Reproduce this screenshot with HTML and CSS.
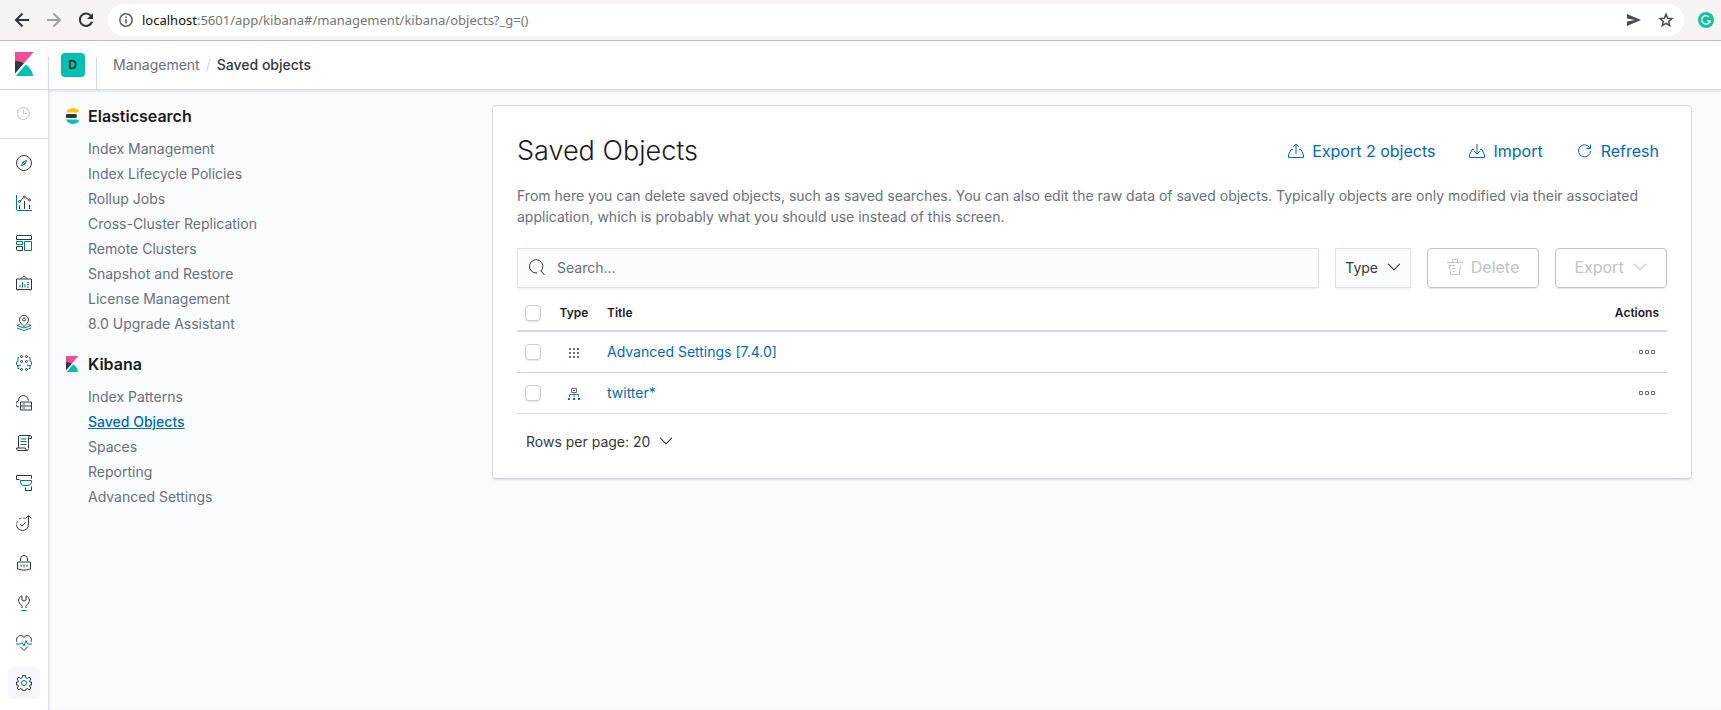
FILE: index.html
```html
<!DOCTYPE html>
<html lang="en">
<head>
<meta charset="utf-8">
<title>Saved objects - Kibana</title>
<link rel="stylesheet" href="styles.css">
</head>
<body>
<svg class="defs" aria-hidden="true">
  <symbol id="logo-kibana" viewBox="0 0 32 32">
    <path fill="#f04e98" d="M4 0v28.789L28.935.017z"/>
    <path fill="#343741" d="M4 12v16.789l11.906-13.738A24.721 24.721 0 0 0 4 12z"/>
    <path fill="#00bfb3" d="M18.479 16.664L6.268 30.754l-1.073 1.237h23.191c-1.252-6.292-4.883-11.719-9.907-15.327z"/>
    <path fill="none" stroke="#fff" stroke-width="1.4" d="M4 30L17.5 14.4"/>
  </symbol>
  <symbol id="chevron" viewBox="0 0 16 16"><path fill="none" stroke="currentColor" stroke-width="1.1" stroke-linecap="round" stroke-linejoin="round" d="M2.4 5.2L8 10.8l5.600-5.600"/></symbol>
  <symbol id="dots" viewBox="0 0 16 16"><path fill="none" stroke="currentColor" d="M.5 6.500h3v3h-3zM6.500 6.500h3v3h-3zM12.500 6.500h3v3h-3z"/></symbol>
</svg>

<div class="browser">
  <div class="browser-buttons">
    <button aria-label="Back"><svg width="16" height="16" viewBox="0 0 16 16" fill="none" stroke="#2e3436" stroke-width="2"><path d="M15 8H2.500M8.500 1.500L2 8l6.500 6.500"/></svg></button>
    <button aria-label="Forward"><svg width="16" height="16" viewBox="0 0 16 16" fill="none" stroke="#a0a1a1" stroke-width="2"><path d="M1 8h12.500M7.500 1.500L14 8l-6.500 6.500"/></svg></button>
    <button aria-label="Reload"><svg width="16" height="16" viewBox="0 0 16 16" fill="none" stroke="#2e3436" stroke-width="2"><path d="M13 4A6.200 6.200 0 1 0 14 9.600"/><path d="M15 1v6H9z" fill="#2e3436" stroke="none"/></svg></button>
  </div>
  <div class="address">
    <svg width="16" height="16" viewBox="0 0 16 16" fill="none" stroke="#5f6368" stroke-width="1.500"><circle cx="8" cy="8" r="6.200"/><path d="M8 7v4.500M8 4.500V6"/></svg>
    <div class="url"><b>localhost</b>:5601/app/kibana#/management/kibana/objects?_g=()</div>
    <button aria-label="Send"><svg width="16" height="16" viewBox="0 0 16 16" fill="#4a4d50"><path d="M1 2l14 6-14 6V9.500L9 8 1 6.500z"/></svg></button>
    <button aria-label="Bookmark"><svg width="16" height="16" viewBox="0 0 16 16" fill="none" stroke="#4a4d50" stroke-width="1.500"><path d="M8 2.200l1.700 4 4.300.4-3.300 2.800 1 4.200L8 11.400l-3.700 2.200 1-4.200L2 6.600l4.300-.4z"/></svg></button>
  </div>
  <svg class="grammarly" width="16" height="16" viewBox="0 0 16 16"><circle cx="8" cy="8" r="8" fill="#15c39a"/><path d="M11 5a4.200 4.200 0 1 0 1 3.800H9M12 8.500V11" fill="none" stroke="#fff" stroke-width="1.300"/></svg>
</div>

<div class="app">
  <nav class="rail" aria-label="Applications">
    <a class="rail-logo" href="#" aria-label="Home"><svg width="24" height="24"><use href="#logo-kibana"/></svg></a>
    <div class="rail-recent">
      <a class="rail-item" href="#" aria-label="Recently viewed"><svg viewBox="0 0 16 16" fill="none" stroke="#c2c3c6"><circle cx="7.500" cy="7.500" r="6"/><path d="M7.500 4v3.500H11"/></svg></a>
    </div>
    <a class="rail-item" href="#" aria-label="Discover"><svg viewBox="0 0 32 32"><circle cx="16" cy="16" r="15"/><path class="teal" d="M21.500 10.500L18 18l-7.500 3.500L14 14zM14 14l4 4"/></svg></a>
    <a class="rail-item" href="#" aria-label="Visualize"><svg viewBox="0 0 32 32"><path class="teal" d="M1 0v29a2 2 0 0 0 2 2h29"/><path d="M7 28v-7M17 28V12M27 28v-8M9 12l5-6M19 5l6 4"/><circle cx="7" cy="13" r="2"/><circle cx="16.500" cy="4" r="2"/><circle cx="27" cy="10" r="2"/></svg></a>
    <a class="rail-item" href="#" aria-label="Dashboard"><svg viewBox="0 0 32 32"><path d="M2 1h28a1 1 0 0 1 1 1v7H1V2a1 1 0 0 1 1-1z"/><path class="teal" d="M1 13h12v6H1zM17 13h14v18H17z"/><path d="M1 23h12v8H3a2 2 0 0 1-2-2z"/></svg></a>
    <a class="rail-item" href="#" aria-label="Canvas"><svg viewBox="0 0 32 32"><path d="M1 8h30v21H1zM9 8l5-5q2-2 4 0l5 5M4 29v2M28 29v2"/><path class="teal" d="M8 25v-5M13 25V14M18 25v-7M22 15h4M22 19h4M22 24h4"/></svg></a>
    <a class="rail-item" href="#" aria-label="Maps"><svg viewBox="0 0 32 32"><path d="M16 23C11 18 7 14 7 9.500a9 9 0 0 1 18 0C25 14 21 18 16 23z"/><circle cx="16" cy="9" r="3"/><path class="teal" d="M8 18l-6 3 14 5 14-5-6-3M2 26l14 5 14-5"/></svg></a>
    <a class="rail-item" href="#" aria-label="Machine Learning"><svg viewBox="0 0 32 32"><circle cx="11" cy="3" r="2"/><circle cx="21" cy="3" r="2"/><circle cx="11" cy="13" r="2"/><circle cx="21" cy="13" r="2"/><circle cx="11" cy="29" r="2"/><circle cx="21" cy="29" r="2"/><path class="teal" d="M6 5H4v7l-3 2v5l3 3v5h3M26 5h2v7l3 2v5l-3 3v5h-3M4 21l6-1M28 21l-6-1"/></svg></a>
    <a class="rail-item" href="#" aria-label="Infrastructure"><svg viewBox="0 0 32 32"><path d="M6 24a6 6 0 0 1-1-12C5 5 9 1 14.500 1S24 5 25 11M9 14h22v16H9zM9 22h22"/><path class="teal" d="M13 18h5M13 26h5"/></svg></a>
    <a class="rail-item" href="#" aria-label="Logs"><svg viewBox="0 0 32 32"><path d="M5 26V4q0-3 3-3h20q-3 0-3 4v21M28 1q3 0 3 3v3h-6M22 31H4q-3 0-3-5h18q0 5 3 5t3-4"/><path class="teal" d="M9 8h12M9 13h12M9 19h12"/></svg></a>
    <a class="rail-item" href="#" aria-label="APM"><svg viewBox="0 0 32 32"><path d="M31 7V1H1v8h6M19 25v6h12v-8"/><path class="teal" d="M9 11h22v3q0 7-7 7H15q-6 0-6-7z"/></svg></a>
    <a class="rail-item" href="#" aria-label="Uptime"><svg viewBox="0 0 32 32"><path d="M1 19a12 12 0 0 0 24 0V2M19 7l6-6 6 6M8 18l4 4 7-7"/><path class="teal" d="M1 17l2-5M6 8l5-2M14 6h4"/></svg></a>
    <a class="rail-item" href="#" aria-label="SIEM"><svg viewBox="0 0 32 32"><path d="M3 14h26v14q-13 5-26 0zM9 12V8a7 7 0 0 1 14 0v4"/><path class="teal" d="M10 19v5M16 19v6M22 19v5"/></svg></a>
    <a class="rail-item" href="#" aria-label="Dev Tools"><svg viewBox="0 0 32 32"><path d="M12 26v-5C2 15 4 4 12 2v8l4 2 4-2V2c8 2 10 13 0 19v5"/><path class="teal" d="M11 31h10"/></svg></a>
    <a class="rail-item" href="#" aria-label="Stack Monitoring"><svg viewBox="0 0 32 32"><path d="M2 14C-1 5 5 1 10 1q4 0 6 4 2-4 6-4c5 0 11 4 8 13M8 23l8 8 8-8"/><path class="teal" d="M0 18h9l3-3 4 7 4-11 3 7h9"/></svg></a>
    <a class="rail-item active" href="#" aria-label="Management"><svg viewBox="0 0 32 32"><path d="M13 1h6v4l4 2 3-3 4 4-3 4 1 2h3v6h-3l-1 2 3 4-4 4-3-3-4 2v2h-6v-2l-4-2-3 3-4-4 3-4-1-2H1v-6h3l1-2-3-4 4-4 3 3 4-2z"/><circle class="teal" cx="16" cy="16" r="5"/></svg></a>
  </nav>

  <div class="workspace">
    <header class="topbar">
      <button class="space" aria-label="Default space"><span>D</span></button>
      <nav class="crumbs" aria-label="Breadcrumb"><a href="#">Management</a><i>/</i><strong>Saved objects</strong></nav>
    </header>

    <div class="page">
      <aside class="side">
        <section>
          <h2><svg width="16" height="16" viewBox="0 0 32 32"><path fill="#fec514" d="M28.924 7.662A15.381 15.381 0 0 0 30.480 6C27.547 2.346 23.050 0 18 0 11.679 0 6.239 3.678 3.644 9H25.510a5.039 5.039 0 0 0 3.413-1.338z"/><path fill="#343741" d="M4 16c0 1.384.194 2.720.538 4H22a4 4 0 0 0 0-8H4.538A15.379 15.379 0 0 0 4 16z"/><path fill="#00bfb3" d="M25.510 23H3.645C6.240 28.323 11.679 32 18 32c5.050 0 9.547-2.346 12.480-6a15.381 15.381 0 0 0-1.556-1.662A5.034 5.034 0 0 0 25.510 23z"/></svg>Elasticsearch</h2>
          <ul>
            <li><a href="#">Index Management</a></li>
            <li><a href="#">Index Lifecycle Policies</a></li>
            <li><a href="#">Rollup Jobs</a></li>
            <li><a href="#">Cross-Cluster Replication</a></li>
            <li><a href="#">Remote Clusters</a></li>
            <li><a href="#">Snapshot and Restore</a></li>
            <li><a href="#">License Management</a></li>
            <li><a href="#">8.0 Upgrade Assistant</a></li>
          </ul>
        </section>
        <section>
          <h2><svg width="16" height="16"><use href="#logo-kibana"/></svg>Kibana</h2>
          <ul>
            <li><a href="#">Index Patterns</a></li>
            <li><a href="#" class="current" aria-current="page">Saved Objects</a></li>
            <li><a href="#">Spaces</a></li>
            <li><a href="#">Reporting</a></li>
            <li><a href="#">Advanced Settings</a></li>
          </ul>
        </section>
      </aside>

      <main class="panel">
        <div class="panel-head">
          <h1>Saved Objects</h1>
          <div class="actions">
            <button><svg width="16" height="16" viewBox="0 0 16 16" fill="none" stroke="currentColor"><path d="M5 6.500H3L.5 12v2.500h15V12L13 6.500h-2M8 11V1M5 4l3-3 3 3"/></svg>Export 2 objects</button>
            <button><svg width="16" height="16" viewBox="0 0 16 16" fill="none" stroke="currentColor"><path d="M5 6.500H3L.5 12v2.500h15V12L13 6.500h-2M8 1v10M5 8l3 3 3-3"/></svg>Import</button>
            <button><svg width="16" height="16" viewBox="0 0 16 16" fill="none" stroke="currentColor"><path d="M12.500 4.500A6 6 0 1 0 13.500 8M13.500 1.500v4h-4"/></svg>Refresh</button>
          </div>
        </div>
        <p class="intro">From here you can delete saved objects, such as saved searches. You can also edit the raw data of saved objects. Typically objects are only modified via their associated application, which is probably what you should use instead of this screen.</p>

        <div class="filters">
          <label class="search">
            <svg width="16" height="16" viewBox="0 0 16 16" fill="none" stroke="currentColor"><path d="M8 14A6.700 6.700 0 1 1 12 12l3.500 4"/></svg>
            <input type="search" placeholder="Search..." aria-label="Search">
          </label>
          <button class="type">Type<svg width="16" height="16"><use href="#chevron"/></svg></button>
          <button class="bulk" disabled><svg width="16" height="16" viewBox="0 0 16 16" fill="none" stroke="currentColor"><path d="M0 3.500h16M5.500 3V.5h5V3M2.500 6l1.200 9.500h8.600L13.500 6M3 6.500h5M5.500 9.500h3M5.500 12.500h2"/></svg>Delete</button>
          <button class="bulk" disabled>Export<svg width="16" height="16"><use href="#chevron"/></svg></button>
        </div>

        <table>
          <thead>
            <tr><th class="check"><input type="checkbox" aria-label="Select all rows"></th><th class="kind">Type</th><th>Title</th><th class="more">Actions</th></tr>
          </thead>
          <tbody>
            <tr>
              <td class="check"><input type="checkbox" aria-label="Select Advanced Settings"></td>
              <td class="kind"><svg width="16" height="16" viewBox="0 0 16 16" fill="#69707d"><path d="M3 4h2v2H3zM7 4h2v2H7zM11 4h2v2h-2zM3 8h2v2H3zM7 8h2v2H7zM11 8h2v2h-2zM3 12h2v2H3zM7 12h2v2H7zM11 12h2v2h-2z"/></svg></td>
              <td><a href="#">Advanced Settings [7.4.0]</a></td>
              <td class="more"><button aria-label="Actions"><svg width="16" height="16"><use href="#dots"/></svg></button></td>
            </tr>
            <tr>
              <td class="check"><input type="checkbox" aria-label="Select twitter*"></td>
              <td class="kind"><svg width="16" height="16" viewBox="0 0 16 16" fill="none" stroke="#69707d"><path d="M5.500 3.500h5v4h-5zM8 7.500V12M3.500 12V9.500h9V12"/><path fill="#017d73" stroke="none" d="M7 5h2v1H7zM2 13h2v2H2zM7 13h2v2H7zM12 13h2v2h-2z"/></svg></td>
              <td><a href="#">twitter*</a></td>
              <td class="more"><button aria-label="Actions"><svg width="16" height="16"><use href="#dots"/></svg></button></td>
            </tr>
          </tbody>
        </table>
        <button class="rows">Rows per page: 20<svg width="16" height="16"><use href="#chevron"/></svg></button>
      </main>
    </div>
  </div>
</div>
</body>
</html>
```
FILE: styles.css
```css
* { box-sizing: border-box; }
body {
  margin: 0;
  min-height: 100vh;
  display: flex;
  flex-direction: column;
  font: 14px/21px Inter, "Liberation Sans", sans-serif;
  color: #343741;
  background: #fafbfd;
}
button {
  font: inherit;
  color: inherit;
  background: none;
  border: 0;
  padding: 0;
  display: inline-flex;
  align-items: center;
  cursor: pointer;
}
svg { flex: none; display: block; }
a { color: #006bb4; text-decoration: none; }
h1, h2, p, ul { margin: 0; padding: 0; }
ul { list-style: none; }
.defs { position: absolute; width: 0; height: 0; }

/* Browser toolbar */
.browser {
  display: flex;
  align-items: center;
  height: 41px;
  padding: 0 7px 0 14px;
  background: #f5f4f2;
  border-bottom: 1px solid #c1beb8;
}
.browser-buttons { display: flex; gap: 16px; margin-right: 14px; }
.address {
  flex: 1;
  display: flex;
  align-items: center;
  gap: 16px;
  height: 32px;
  padding: 0 10px;
  border-radius: 16px;
  background: #fff;
}
.url {
  flex: 1;
  margin-left: -8px;
  font: 13px/20px "Noto Sans", sans-serif;
  color: #757575;
}
.url b { font-weight: 400; color: #111; }
.grammarly { margin-left: 14px; }

/* Icon rail */
.app { flex: 1; display: flex; }
.rail {
  flex: 0 0 48px;
  display: flex;
  flex-direction: column;
  background: #fff;
}
.rail-logo {
  height: 49px;
  padding: 11px 12px;
  border-bottom: 1px solid #d3dae6;
}
.rail-recent { padding: 4px 0; margin-bottom: 4px; border-bottom: 1px solid #d3dae6; }
.rail-item {
  display: block;
  width: 32px;
  height: 32px;
  margin: 4px 8px;
  padding: 8px;
  border-radius: 4px;
}
.rail-item.active { background: #f5f7fa; }
.rail-item svg { width: 16px; height: 16px; }
.rail-item svg[viewBox="0 0 32 32"] { fill: none; stroke: #343741; stroke-width: 2; }
.rail-item .teal { stroke: #017d73; }

/* Header */
.workspace { flex: 1; min-width: 0; display: flex; flex-direction: column; }
.topbar {
  display: flex;
  align-items: center;
  height: 49px;
  background: #fff;
  border-bottom: 1px solid #d3dae6;
  box-shadow: 0 2px 2px rgba(152, 162, 179, .2);
}
.space {
  width: 49px;
  height: 48px;
  justify-content: center;
  background:
    linear-gradient(#d3dae6, #d3dae6) left bottom / 1px 32px no-repeat,
    linear-gradient(#d3dae6, #d3dae6) right bottom / 1px 32px no-repeat;
}
.space span {
  width: 24px;
  border-radius: 4px;
  background: #00bfb3;
  color: #000;
  font-size: 12px;
  line-height: 24px;
  font-weight: 500;
}
.crumbs { display: flex; gap: 6px; padding: 0 0 2px 16px; }
.crumbs a { color: #69707d; }
.crumbs i { color: #d3dae6; font-style: normal; }
.crumbs strong { font-weight: 500; }

/* Page */
.page {
  flex: 1;
  display: flex;
  align-items: flex-start;
  gap: 16px;
  padding: 14px 29px 24px 15px;
  border-left: 1px solid #dfe3ec;
  box-shadow: inset 2px 0 2px -1px rgba(152, 162, 179, .2);
}
.side { flex: 0 0 412px; }
.side section { padding-bottom: 16px; }
.side h2 {
  display: flex;
  align-items: center;
  gap: 8px;
  padding-bottom: 8px;
  font-size: 16px;
  line-height: 24px;
  font-weight: 600;
  color: #1a1c21;
}
.side ul { padding-left: 24px; }
.side li { line-height: 25px; }
.side a { color: #69707d; }
.side a.current { color: #006bb4; font-weight: 500; text-decoration: underline; }

.panel {
  flex: 1;
  min-width: 0;
  margin-top: 1px;
  padding: 24px 24px 16px;
  background: #fff;
  border: 1px solid #d3dae6;
  border-radius: 4px;
  box-shadow: 0 2px 2px -1px rgba(152, 162, 179, .3);
}
.panel-head { display: flex; justify-content: space-between; align-items: center; height: 42px; }
h1 { font-size: 27px; line-height: 40px; font-weight: 300; color: #1a1c21; }
.actions { display: flex; gap: 18px; font-size: 16px; line-height: 24px; color: #006bb4; }
.actions button { gap: 8px; padding: 0 8px; }
.intro { margin: 13px 0 21px; color: #69707d; }

.filters { display: flex; gap: 16px; margin-bottom: 8px; }
.filters > * { height: 40px; }
.search {
  flex: 1;
  display: flex;
  align-items: center;
  gap: 12px;
  padding: 0 11px 2px;
}
.search, .type {
  background: #fbfcfd;
  border: 1px solid #dfe1e6;
  box-shadow: 0 2px 2px -1px rgba(152, 162, 179, .2);
}
.search input { flex: 1; border: 0; padding: 0; background: none; font: inherit; outline: 0; }
.search input::placeholder { color: #69707d; opacity: 1; }
.type { gap: 8px; padding: 0 8px 2px 9px; }
.bulk {
  width: 112px;
  justify-content: center;
  gap: 8px;
  padding-bottom: 2px;
  font-size: 16px;
  color: #c2c3c6;
  border: 1px solid #c2c3c6;
  border-radius: 4px;
  box-shadow: 0 2px 2px -1px rgba(152, 162, 179, .3);
}

/* Table */
table { width: 100%; border-collapse: separate; border-spacing: 0; }
th, td { padding: 0 8px; text-align: left; }
th { height: 36px; font-size: 12px; line-height: 18px; font-weight: 600; color: #1a1c21; border-bottom: 2px solid #d3dae6; }
td { height: 41px; padding-bottom: 1px; border-bottom: 1px solid #d3dae6; }
.check { width: 32px; }
.kind { width: 50px; text-align: center; }
.kind svg { margin: 0 auto; }
.more { width: 80px; text-align: right; }
.more button { color: #69707d; padding: 0 4px 2px; vertical-align: middle; }
input[type="checkbox"] {
  appearance: none;
  display: block;
  width: 16px;
  height: 16px;
  margin: 0;
  border: 1px solid #c9cbcd;
  border-radius: 4px;
  background: #fff;
  box-shadow: 0 2px 2px -1px rgba(152, 162, 179, .3);
}
.rows { gap: 8px; margin-top: 8px; padding: 0 8px 2px 9px; height: 40px; }
```
